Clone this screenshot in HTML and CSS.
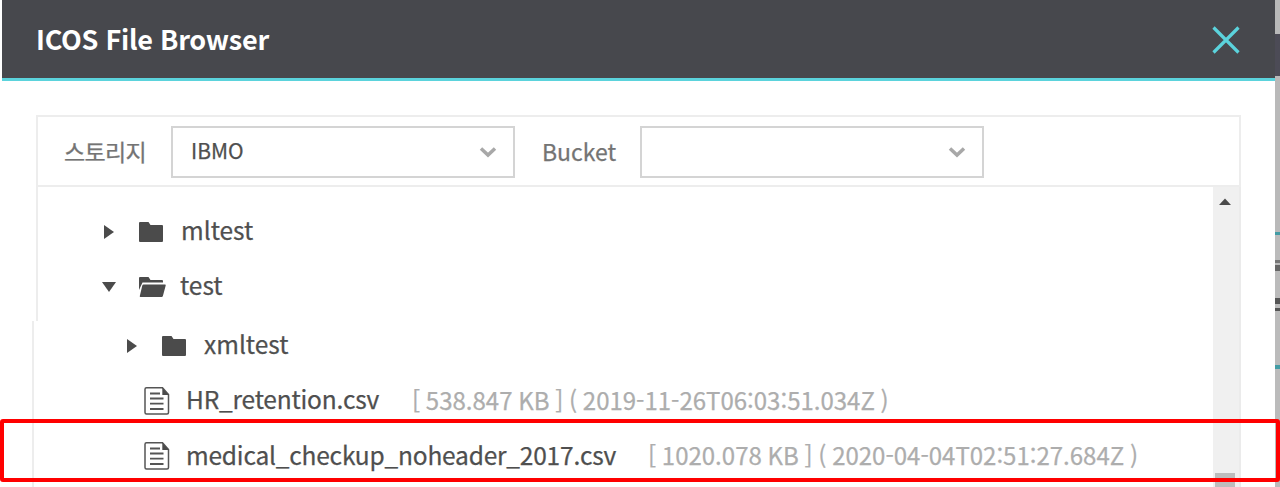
FILE: index.html
```html
<!DOCTYPE html>
<html lang="ko">
<head>
<meta charset="utf-8">
<title>ICOS File Browser</title>
<link rel="stylesheet" href="styles.css">
</head>
<body>
<svg class="defs" width="0" height="0">
  <symbol id="folder" viewBox="0 0 26 22"><path d="M1 2Q1 1 2 1H10.5L12.5 4H24Q25 4 25 5V20Q25 21 24 21H2Q1 21 1 20Z"/></symbol>
  <symbol id="folder-open" viewBox="0 0 28 22"><path d="M1 2Q1 1 2 1H10.5L12.500 4H24Q25 4 25 5V6.500H4.500L1 14Z"/><path d="M5.500 8.500H27Q28 8.500 27.700 9.500L24.900 20Q24.600 21 23.600 21H2.500Q1.500 21 1.800 20L4.300 9.500Q4.600 8.500 5.500 8.500Z"/></symbol>
  <symbol id="file" viewBox="0 0 26 28"><path d="M2.500 .8H18.500L24.500 7.500V25.500Q24.500 27 23 27H2.500Q1 27 1 25.500V2.300Q1 .8 2.500 .8Z" fill="#fff" stroke="#555" stroke-width="1.500"/><path d="M18.300 .8L24.800 8H18.300Z"/><path d="M6 6.500H16M6 11.500H19.500M6 16.700H19.500M6 22H19.500" stroke="#555" stroke-width="1.800"/></symbol>
</svg>
<div class="screen">
  <main class="dialog">
    <header class="header">
      <h1 class="title">ICOS File Browser</h1>
      <svg class="close" viewBox="0 0 28 28"><path d="M1.500 1.500L26.500 26.500M26.500 1.500L1.500 26.500"/></svg>
    </header>
    <section class="panel">
      <div class="toolbar">
        <span class="label storage-label">스토리지</span>
        <div class="select"><span class="value">IBMO</span><svg class="chevron" viewBox="0 0 18 12"><path d="M2 2.500L9 9L16 2.500"/></svg></div>
        <span class="label bucket-label">Bucket</span>
        <div class="select"><span class="value"></span><svg class="chevron" viewBox="0 0 18 12"><path d="M2 2.500L9 9L16 2.500"/></svg></div>
      </div>
      <div class="content">
        <div class="tree">
          <div class="group upper">
            <div class="row"><svg class="arrow" viewBox="0 0 14 14"><path d="M2 0V14L12 7Z"/></svg><svg class="folder"><use href="#folder"/></svg><span class="name">mltest</span></div>
            <div class="row"><svg class="arrow" viewBox="0 0 14 14"><path d="M0 2H14L7 12Z"/></svg><svg class="folder open"><use href="#folder-open"/></svg><span class="name">test</span></div>
          </div>
          <div class="group lower">
            <div class="row nested"><svg class="arrow" viewBox="0 0 14 14"><path d="M2 0V14L12 7Z"/></svg><svg class="folder"><use href="#folder"/></svg><span class="name">xmltest</span></div>
            <div class="row leaf first"><svg class="file"><use href="#file"/></svg><span class="name file-name retention">HR_retention.csv</span><span class="meta">[ 538.847 KB ] ( 2019-11-26T06:03:51.034Z )</span></div>
            <div class="row leaf"><svg class="file"><use href="#file"/></svg><span class="name file-name">medical_checkup_noheader_2017.csv</span><span class="meta">[ 1020.078 KB ] ( 2020-04-04T02:51:27.684Z )</span></div>
          </div>
        </div>
        <div class="scrollbar"><svg class="up" viewBox="0 0 12 7"><path d="M0 7L6 .5L12 7Z"/></svg><div class="thumb"></div></div>
      </div>
    </section>
  </main>
  <div class="backdrop"></div>
  <div class="highlight"></div>
</div>
</body>
</html>
```

FILE: styles.css
```css
* { box-sizing: border-box; }
body { margin: 0; background: #fff; overflow: hidden; font-family: "Noto Sans CJK KR", "Noto Sans", sans-serif; color: #4f4f4f; -webkit-text-stroke: .25px currentColor; }
.defs { display: block; height: 0; }
.screen { position: relative; display: flex; width: 1280px; height: 487px; padding-left: 2px; overflow: hidden; }
.dialog { display: flex; flex-direction: column; width: 1273px; height: 487px; }
.header { display: flex; align-items: center; justify-content: space-between; flex: none; height: 81px; padding: 0 35px 0 34px; background: #47484d; border-bottom: 3px solid #5bd3dc; }
.title { margin: 0; color: #fff; font-size: 27px; font-weight: 700; line-height: 40px; letter-spacing: -.25px; white-space: nowrap; -webkit-text-stroke: 0; }
.close { width: 28px; height: 28px; margin-top: 2px; fill: none; stroke: #5bd3dc; stroke-width: 3.2; }
.panel { display: flex; flex-direction: column; flex: 1; min-height: 0; margin: 34px 34px 0 30px; }
.toolbar { display: flex; align-items: center; flex: none; height: 72px; margin-left: 4px; padding-left: 26px; border: 2px solid #ededed; }
.label { color: #747474; font-size: 23px; line-height: 36px; white-space: nowrap; }
.storage-label { width: 107px; letter-spacing: -.7px; }
.bucket-label { width: 98px; margin-left: 27px; }
.select { display: flex; align-items: center; justify-content: space-between; width: 344px; height: 52px; margin-top: 1px; padding: 0 16px 0 18px; border: 2px solid #d4d4d4; }
.value { padding-bottom: 4px; font-size: 21px; line-height: 32px; }
.chevron { width: 18px; height: 12px; fill: none; stroke: #a8a8a8; stroke-width: 3.500; }
.content { display: flex; flex: 1; min-height: 0; }
.tree { flex: 1; }
.group { border-left: 2px solid #ededed; }
.upper { height: 134px; margin-left: 4px; padding: 17px 0 0 64px; }
.lower { height: 166px; }
.row { display: flex; align-items: center; height: 55px; fill: #4b4b4b; white-space: nowrap; }
.arrow { flex: none; width: 14px; height: 14px; }
.folder { flex: none; width: 26px; height: 22px; margin-left: 22px; }
.open { width: 28px; }
.name { margin-left: 17px; padding-bottom: 3px; font-size: 24.5px; line-height: 36px; }
.open + .name { margin-left: 14px; }
.nested { height: 49px; padding-left: 91px; }
.leaf { height: 50px; padding-left: 110px; }
.first { height: 61px; }
.file { flex: none; width: 26px; height: 28px; }
.file-name { width: 462px; margin-left: 16px; letter-spacing: -.2px; }
.retention { width: 226px; }
.meta { padding-bottom: 2px; color: #adadad; font-size: 24px; line-height: 36px; word-spacing: -1px; }
.scrollbar { display: flex; flex-direction: column; align-items: center; justify-content: space-between; width: 28px; padding: 11px 2px 0 0; background: #f0f0f0; border-right: 2px solid #ebebeb; }
.up { width: 12px; height: 7px; fill: #4b4b4b; }
.thumb { width: 20px; height: 14px; background: #bdbdbd; }
.backdrop { width: 5px; background: linear-gradient(#b9b9b9 0 34px, #4c4b56 34px 76px, #b9b9b9 76px 232px, #439ca5 232px 235px, #bbb 235px 260px, #777 260px 263px, #bbb 263px 265px, #666 265px 271px, #bbb 271px 298px, #555 298px 304px, #bbb 304px 308px, #555 308px 311px, #bbb 311px 365px, #439ca5 365px 369px, #bbb 369px); }
.highlight { position: absolute; left: 0; top: 419px; width: 1280px; height: 63px; border: 4px solid #f00; border-radius: 3px; }
```
